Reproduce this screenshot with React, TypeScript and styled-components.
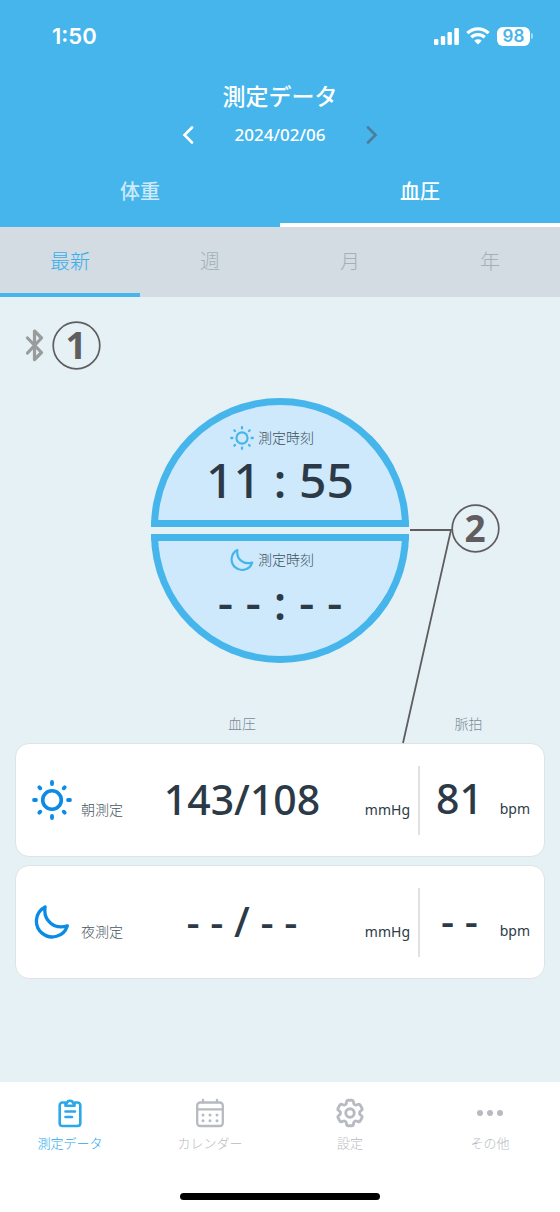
import React from "react";
import styled, { createGlobalStyle } from "styled-components";
import { HiOutlineCog6Tooth } from "react-icons/hi2";

const GlobalStyle = createGlobalStyle`
  *, *::before, *::after { box-sizing: border-box; }
  body {
    margin: 0;
    font-family: "Noto Sans", "Noto Sans CJK JP", sans-serif;
    color: #2c3a47;
    background: #e6f1f5;
  }
  button { font: inherit; border: 0; background: none; padding: 0; cursor: pointer; }
`;

const Page = styled.div`
  min-height: 100vh;
  display: flex;
  flex-direction: column;
`;

/* ---------- header ---------- */

const Header = styled.header`
  background: #45b5eb;
  color: #fff;
`;

const StatusBar = styled.div`
  height: 72px;
  padding: 0 27px 0 52px;
  display: flex;
  align-items: center;
  justify-content: space-between;
`;

const Clock = styled.span`
  font: 600 22px/28px Inter, sans-serif;
`;

const StatusIcons = styled.div`
  display: flex;
  align-items: center;
  gap: 7px;
`;

const Battery = styled.div`
  display: flex;
  align-items: center;
  gap: 1px;
`;

const BatteryLevel = styled.span`
  width: 33px;
  height: 19px;
  border-radius: 6px;
  background: #fff;
  color: #45b5eb;
  font: 600 17px/19px Inter, sans-serif;
  text-align: center;
`;

const BatteryTip = styled.span`
  width: 2px;
  height: 6px;
  border-radius: 0 2px 2px 0;
  background: #a5daf4;
`;

const Title = styled.h1`
  margin: 0;
  padding-top: 8px;
  font-size: 23px;
  font-weight: 500;
  line-height: 32px;
  text-align: center;
`;

const DateNav = styled.div`
  display: flex;
  justify-content: center;
  align-items: center;
  height: 46px;
`;

const DateText = styled.time`
  width: 160px;
  text-align: center;
  font-size: 17px;
  font-weight: 500;
  line-height: 24px;
`;

const Arrow = styled.button<{ $dim?: boolean }>`
  width: 24px;
  height: 24px;
  display: flex;
  align-items: center;
  justify-content: center;
  color: ${(p) => (p.$dim ? "#4a7f9c" : "#fff")};
`;

const Tabs = styled.div`
  display: flex;
`;

const MainTab = styled.button<{ $active?: boolean }>`
  flex: 1;
  height: 69px;
  padding-top: 2px;
  border-bottom: 4px solid ${(p) => (p.$active ? "#fff" : "transparent")};
  color: ${(p) => (p.$active ? "#fff" : "#cdeafa")};
  font-size: 20px;
  font-weight: 500;
  line-height: 28px;
`;

const PeriodTabs = styled.div`
  display: flex;
  background: #d2dce2;
`;

const PeriodTab = styled.button<{ $active?: boolean }>`
  flex: 1;
  height: 70px;
  padding-top: 4px;
  border-bottom: 4px solid ${(p) => (p.$active ? "#45b5eb" : "transparent")};
  color: ${(p) => (p.$active ? "#3aaeea" : "#a3b0b8")};
  font-size: 20px;
  font-weight: 300;
  line-height: 28px;
`;

/* ---------- content ---------- */

const Main = styled.main`
  flex: 1;
  padding: 24px 15px 32px;
`;

const Connection = styled.div`
  display: flex;
  align-items: center;
  gap: 8px;
  padding-left: 9px;
`;

const MarkerSvg = styled.svg`
  display: block;
  overflow: visible;
  color: #5f5d5f;
  font-size: 37px;
  font-weight: 700;
`;

const Dial = styled.section`
  position: relative;
  width: 258px;
  margin: 28px auto 0;
  display: flex;
  flex-direction: column;
  gap: 7px;
`;

const HalfDial = styled.div<{ $lower?: boolean }>`
  height: 129px;
  border: 7px solid #45b5eb;
  border-radius: ${(p) => (p.$lower ? "0 0 129px 129px" : "129px 129px 0 0")};
  background: #cde9fb;
  padding-top: ${(p) => (p.$lower ? "7px" : "21px")};
  display: flex;
  flex-direction: column;
  align-items: center;
`;

const DialLabel = styled.div`
  display: flex;
  align-items: center;
  gap: 4px;
  height: 24px;
  padding-right: 16px;
  color: #45b5eb;

  span {
    color: #3f4d5a;
    font-size: 14px;
    font-weight: 300;
    line-height: 24px;
  }
`;

const DialTime = styled.div`
  font-size: 48px;
  font-weight: 500;
  line-height: 60px;
  white-space: pre;
`;

const Leader = styled.svg`
  position: absolute;
  left: 100%;
  top: 131px;
  margin-left: -8px;
  overflow: visible;
`;

const DialMarker = styled.div`
  position: absolute;
  left: 100%;
  top: 106px;
  margin-left: 42px;
`;

/* ---------- readings ---------- */

const Readings = styled.table`
  display: block;
  margin-top: 48px;

  thead { display: block; }
  tbody { display: flex; flex-direction: column; gap: 8px; }
`;

const HeadRow = styled.tr`
  display: grid;
  grid-template-columns: 120px 1fr 126px;
  padding: 0 1px;
  height: 32px;

  th {
    padding: 0;
    color: #7c8a95;
    font-size: 14px;
    font-weight: 300;
    line-height: 26px;
    text-align: center;
  }
  th:nth-child(2) { padding-right: 70px; }
  th:nth-child(3) { padding-right: 25px; }
`;

const ReadingRow = styled.tr`
  display: grid;
  grid-template-columns: 120px 1fr 126px;
  align-items: center;
  height: 114px;
  border: 1px solid #dfe2e6;
  border-radius: 14px;
  background: #fff;
`;

const RowLabel = styled.th`
  padding: 0 0 0 16px;
  display: flex;
  align-items: center;
  gap: 9px;
  font-weight: 400;
`;

const RowIcon = styled.span`
  width: 40px;
  display: flex;
  justify-content: center;
  color: #0a8be6;
`;

const RowName = styled.span`
  padding-top: 20px;
  color: #465461;
  font-size: 14px;
  font-weight: 300;
  line-height: 20px;
`;

const Pressure = styled.td`
  padding: 0 8px 3px 0;
  display: grid;
  grid-template-columns: 212fr 62fr;
  align-items: baseline;
`;

const Pulse = styled.td`
  height: 69px;
  padding: 0 14px 5px 0;
  border-left: 2px solid #dfe2e5;
  display: grid;
  grid-template-columns: 1fr 31px;
  align-content: center;
  align-items: baseline;
`;

const Value = styled.span`
  font-size: 41px;
  font-weight: 500;
  line-height: 56px;
  text-align: center;
  white-space: pre;
`;

const Unit = styled.span`
  font-size: 14px;
  font-weight: 400;
  line-height: 20px;
  display: flex;
  justify-content: flex-end;
`;

/* ---------- bottom navigation ---------- */

const BottomNav = styled.nav`
  background: #fff;
  height: 130px;
  display: flex;
  flex-direction: column;
  justify-content: space-between;
  align-items: center;
  padding: 16px 0 12px;
`;

const NavItems = styled.div`
  width: 100%;
  display: flex;
`;

const NavItem = styled.button<{ $active?: boolean }>`
  flex: 1;
  display: flex;
  flex-direction: column;
  align-items: center;
  gap: 5px;
  color: ${(p) => (p.$active ? "#2aa8ea" : "#b7bac0")};
  font-size: 13px;
  font-weight: 300;
  line-height: 20px;

  svg { display: block; }
`;

const NavIcon = styled.span`
  height: 30px;
  display: flex;
  align-items: center;
`;

const HomeIndicator = styled.div`
  width: 200px;
  height: 7px;
  border-radius: 4px;
  background: #000;
`;

/* ---------- icons ---------- */

const Sun = ({ size }: { size: number }) => (
  <svg width={size} height={size} viewBox="0 0 40 40" fill="none" stroke="currentColor" strokeLinecap="round" aria-hidden>
    <circle cx="20" cy="20" r="9.3" strokeWidth="3.6" />
    <path
      strokeWidth="3.8"
      d="M20 2v2M20 36v2M2 20h2M36 20h2M7.3 7.3l1 1M31.7 31.7l1 1M7.3 32.7l1-1M31.7 8.3l1-1"
    />
  </svg>
);

const Moon = ({ size }: { size: number }) => (
  <svg width={size} height={size} viewBox="3.5 1.5 36 36" fill="none" stroke="currentColor" strokeWidth="3.3" strokeLinejoin="round" aria-hidden>
    <path d="M14.6 4.500A15.800 15.800 0 1 0 36.800 23.400C23.500 27.200 12.500 18 14.600 4.500Z" />
  </svg>
);

const Chevron = ({ right }: { right?: boolean }) => (
  <svg width="12" height="18" viewBox="0 0 12 18" fill="none" stroke="currentColor" strokeWidth="2.6" strokeLinecap="round" aria-hidden>
    <path d={right ? "M2 1.5 9.5 9 2 16.5" : "M10 1.5 2.5 9l7.5 7.5"} />
  </svg>
);

const Signal = () => (
  <svg width="25" height="17" viewBox="0 0 25 17" fill="currentColor" aria-hidden>
    <rect x="0" y="11" width="4.4" height="6" rx="1.2" />
    <rect x="6.8" y="8" width="4.4" height="9" rx="1.2" />
    <rect x="13.5" y="4" width="4.4" height="13" rx="1.2" />
    <rect x="20.3" y="0" width="4.6" height="17" rx="1.2" />
  </svg>
);

const Wifi = () => (
  <svg width="24" height="18" viewBox="0 0 24 18" fill="none" stroke="currentColor" strokeWidth="3.3" aria-hidden>
    <path d="M1.4 6.1a15.2 15.2 0 0 1 21.2 0" />
    <path d="M5.3 10.3a9.6 9.6 0 0 1 13.4 0" />
    <path d="M8.3 13.7a5.4 5.4 0 0 1 7.4 0L12 17.4Z" fill="currentColor" stroke="none" />
  </svg>
);

const Bluetooth = () => (
  <svg width="20" height="34" viewBox="0 0 20 34" fill="none" stroke="#999b9d" strokeWidth="3.2" strokeLinecap="round" strokeLinejoin="round" aria-hidden>
    <path d="M3.500 9 17.500 23.500 10.500 30.500V2L17.500 9 3.500 24" />
  </svg>
);

const Marker = ({ label }: { label: string }) => (
  <MarkerSvg width="49" height="49" viewBox="0 0 49 49">
    <circle cx="24.5" cy="24.5" r="23.3" fill="none" stroke="currentColor" strokeWidth="1.7" />
    <text x="24" y="38" textAnchor="middle" fill="currentColor">
      {label}
    </text>
  </MarkerSvg>
);

const Clipboard = () => (
  <svg width="28" height="30" viewBox="0 0 28 30" fill="none" stroke="currentColor" strokeWidth="2.6" strokeLinecap="round" strokeLinejoin="round" aria-hidden>
    <path d="M9 4.500H6.500a2.800 2.800 0 0 0-2.800 2.800V25.200a2.800 2.800 0 0 0 2.800 2.800h15a2.800 2.800 0 0 0 2.800-2.800V7.300a2.800 2.800 0 0 0-2.800-2.800H19" />
    <path d="M9.500 7.800V5.200h1.300a3.300 3.300 0 0 1 6.400 0h1.300v2.600Z" />
    <path d="M9.500 13.500h9.500M9.500 19h6.500" />
  </svg>
);

const CalendarIcon = () => (
  <svg width="30" height="30" viewBox="0 0 30 30" fill="none" stroke="currentColor" strokeWidth="2.3" strokeLinecap="round" aria-hidden>
    <rect x="2.2" y="4.5" width="25.6" height="23.5" rx="3" />
    <path d="M2.200 11.300h25.600M8 1.800v2.500M22 1.800v2.500" />
    <path strokeWidth="3" d="M8 17h0M15 17h0M22 17h0M8 22.700h0M15 22.700h0M22 22.700h0" />
  </svg>
);

const Dots = () => (
  <svg width="30" height="30" viewBox="0 0 30 30" fill="currentColor" aria-hidden>
    <circle cx="5" cy="15" r="3" />
    <circle cx="15" cy="15" r="3" />
    <circle cx="25" cy="15" r="3" />
  </svg>
);

const readings = [
  { label: "朝測定", icon: <Sun size={40} />, pressure: "143/108", pulse: "81" },
  { label: "夜測定", icon: <Moon size={36} />, pressure: "- - / - -", pulse: "- -" },
];

const navItems = [
  { label: "測定データ", icon: <Clipboard /> },
  { label: "カレンダー", icon: <CalendarIcon /> },
  { label: "設定", icon: <HiOutlineCog6Tooth size={34} strokeWidth={2} /> },
  { label: "その他", icon: <Dots /> },
];

export default function App() {
  return (
    <Page>
      <GlobalStyle />
      <Header>
        <StatusBar>
          <Clock>1:50</Clock>
          <StatusIcons>
            <Signal />
            <Wifi />
            <Battery>
              <BatteryLevel>98</BatteryLevel>
              <BatteryTip />
            </Battery>
          </StatusIcons>
        </StatusBar>
        <Title>測定データ</Title>
        <DateNav>
          <Arrow aria-label="前の日">
            <Chevron />
          </Arrow>
          <DateText dateTime="2024-02-06">2024/02/06</DateText>
          <Arrow aria-label="次の日" $dim>
            <Chevron right />
          </Arrow>
        </DateNav>
        <Tabs role="tablist">
          <MainTab role="tab" aria-selected={false}>体重</MainTab>
          <MainTab role="tab" aria-selected $active>血圧</MainTab>
        </Tabs>
      </Header>
      <PeriodTabs role="tablist">
        {["最新", "週", "月", "年"].map((name, i) => (
          <PeriodTab key={name} role="tab" aria-selected={i === 0} $active={i === 0}>
            {name}
          </PeriodTab>
        ))}
      </PeriodTabs>

      <Main>
        <Connection>
          <Bluetooth />
          <Marker label="1" />
        </Connection>

        <Dial>
          <HalfDial>
            <DialLabel>
              <Sun size={24} />
              <span>測定時刻</span>
            </DialLabel>
            <DialTime>11 : 55</DialTime>
          </HalfDial>
          <HalfDial $lower>
            <DialLabel>
              <Moon size={24} />
              <span>測定時刻</span>
            </DialLabel>
            <DialTime>- - : - -</DialTime>
          </HalfDial>
          <Leader width="50" height="214" viewBox="0 0 50 214" fill="none" stroke="#5f5d5f" strokeWidth="1.8" aria-hidden>
            <path d="M9 1H50L2 214" />
          </Leader>
          <DialMarker>
            <Marker label="2" />
          </DialMarker>
        </Dial>

        <Readings>
          <thead>
            <HeadRow>
              <td />
              <th scope="col">血圧</th>
              <th scope="col">脈拍</th>
            </HeadRow>
          </thead>
          <tbody>
            {readings.map((r) => (
              <ReadingRow key={r.label}>
                <RowLabel scope="row">
                  <RowIcon>{r.icon}</RowIcon>
                  <RowName>{r.label}</RowName>
                </RowLabel>
                <Pressure>
                  <Value>{r.pressure}</Value>
                  <Unit>mmHg</Unit>
                </Pressure>
                <Pulse>
                  <Value>{r.pulse}</Value>
                  <Unit>bpm</Unit>
                </Pulse>
              </ReadingRow>
            ))}
          </tbody>
        </Readings>
      </Main>

      <BottomNav>
        <NavItems>
          {navItems.map((item, i) => (
            <NavItem key={item.label} $active={i === 0}>
              <NavIcon>{item.icon}</NavIcon>
              {item.label}
            </NavItem>
          ))}
        </NavItems>
        <HomeIndicator />
      </BottomNav>
    </Page>
  );
}
